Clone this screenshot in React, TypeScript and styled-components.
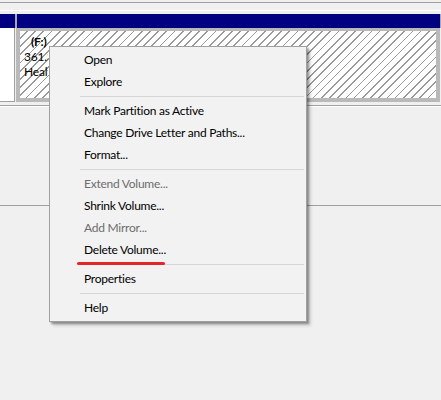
import React from "react";
import styled, { createGlobalStyle } from "styled-components";

const Global = createGlobalStyle`
  html, body { margin: 0; padding: 0; background: #f0f0f0; }
  body { font-family: Lato, "Noto Sans", "Liberation Sans", sans-serif; }
`;

const Screen = styled.div`
  position: relative;
  width: 441px;
  height: 400px;
  overflow: hidden;
  background: #f0f0f0;
  display: flex;
  flex-direction: column;
`;

const TopStrip = styled.div`
  height: 14px;
  flex: none;
  background: linear-gradient(
    to bottom,
    #f0f0f0 0 2px,
    #a0a0a0 2px 3px,
    #f0f0f0 3px 10px,
    #ffffff 10px 11px,
    #f0f0f0 11px
  );
`;

const HeaderRow = styled.div`
  height: 14px;
  flex: none;
  display: flex;
  gap: 2px;
  background: #a9a9a9;
  padding-right: 1px;
`;

const NavyCell = styled.div<{ $w?: number }>`
  background: #000080;
  ${(p) => (p.$w ? `width: ${p.$w}px; flex: none;` : `flex: 1;`)}
`;

const DiskRow = styled.div`
  height: 74px;
  flex: none;
  display: flex;
  gap: 1px;
`;

const LabelCell = styled.div`
  width: 14px;
  flex: none;
  background: #ffffff;
  border-right: 1px solid #a0a0a0;
  border-bottom: 1px solid #a0a0a0;
`;

const PartitionFrame = styled.div`
  flex: 1;
  display: flex;
  border: 4px solid #b9b9b9;
  border-top-width: 3px;
  margin-right: 1px;
`;

const Hatched = styled.div`
  flex: 1;
  padding: 4px 0 0 4px;
  background-color: #ffffff;
  background-image: repeating-linear-gradient(
    135deg,
    transparent 0 4.6px,
    #9a9a9a 4.6px 5.8px
  );
`;

const Caption = styled.div`
  width: 24px;
  overflow: hidden;
  font-size: 12px;
  letter-spacing: -0.2px;
  color: #000;
  white-space: nowrap;
`;

const DriveName = styled.div`
  font-weight: bold;
  padding-left: 7px;
  line-height: 14px;
`;

const InfoLine = styled.div`
  line-height: 15px;
`;

const DoubleRule = styled.div`
  height: 6px;
  flex: none;
  background: linear-gradient(
    to bottom,
    #f0f0f0 0 3px,
    #a0a0a0 3px 4px,
    #ffffff 4px 5px,
    #f0f0f0 5px
  );
`;

const Pane = styled.div<{ $h: number }>`
  height: ${(p) => p.$h}px;
  flex: none;
`;

const Rule = styled.div`
  height: 1px;
  flex: none;
  background: #a0a0a0;
`;

const Menu = styled.div`
  position: absolute;
  left: 49px;
  top: 46px;
  width: 256px;
  padding: 2px 0;
  background: #f2f2f2;
  border: 1px solid #a0a0a0;
  box-shadow: 2px 2px 2px rgba(0, 0, 0, 0.35), 4px 4px 3px rgba(0, 0, 0, 0.12);
  display: flex;
  flex-direction: column;
`;

const Item = styled.div<{ $disabled?: boolean }>`
  height: 22px;
  line-height: 22px;
  padding-left: 34px;
  font-size: 12px;
  letter-spacing: -0.25px;
  color: ${(p) => (p.$disabled ? "#6d6d6d" : "#000000")};
  white-space: nowrap;
`;

const Separator = styled.div`
  height: 7px;
  display: flex;
  align-items: center;
  padding: 0 2px 0 30px;
  &::after {
    content: "";
    flex: 1;
    height: 1px;
    background: #d7d7d7;
  }
`;

const Annotation = styled.div`
  position: absolute;
  left: 77px;
  top: 262px;
  width: 88px;
  height: 3px;
  border-radius: 2px;
  background: #e3262b;
`;

type Entry = { label: string; disabled?: boolean } | "sep";

const entries: Entry[] = [
  { label: "Open" },
  { label: "Explore" },
  "sep",
  { label: "Mark Partition as Active" },
  { label: "Change Drive Letter and Paths..." },
  { label: "Format..." },
  "sep",
  { label: "Extend Volume...", disabled: true },
  { label: "Shrink Volume..." },
  { label: "Add Mirror...", disabled: true },
  { label: "Delete Volume..." },
  "sep",
  { label: "Properties" },
  "sep",
  { label: "Help" },
];

export default function App() {
  return (
    <>
      <Global />
      <Screen>
        <TopStrip />
        <HeaderRow>
          <NavyCell $w={15} />
          <NavyCell />
        </HeaderRow>
        <DiskRow>
          <LabelCell />
          <PartitionFrame>
            <Hatched>
              <Caption>
                <DriveName>(F:)</DriveName>
                <InfoLine>361.32 GB NTFS</InfoLine>
                <InfoLine>Healthy (Primary Partition)</InfoLine>
              </Caption>
            </Hatched>
          </PartitionFrame>
        </DiskRow>
        <DoubleRule />
        <Pane $h={97} />
        <Rule />
        <Menu>
          {entries.map((e, i) =>
            e === "sep" ? (
              <Separator key={i} />
            ) : (
              <Item key={i} $disabled={e.disabled}>
                {e.label}
              </Item>
            )
          )}
        </Menu>
        <Annotation />
      </Screen>
    </>
  );
}
